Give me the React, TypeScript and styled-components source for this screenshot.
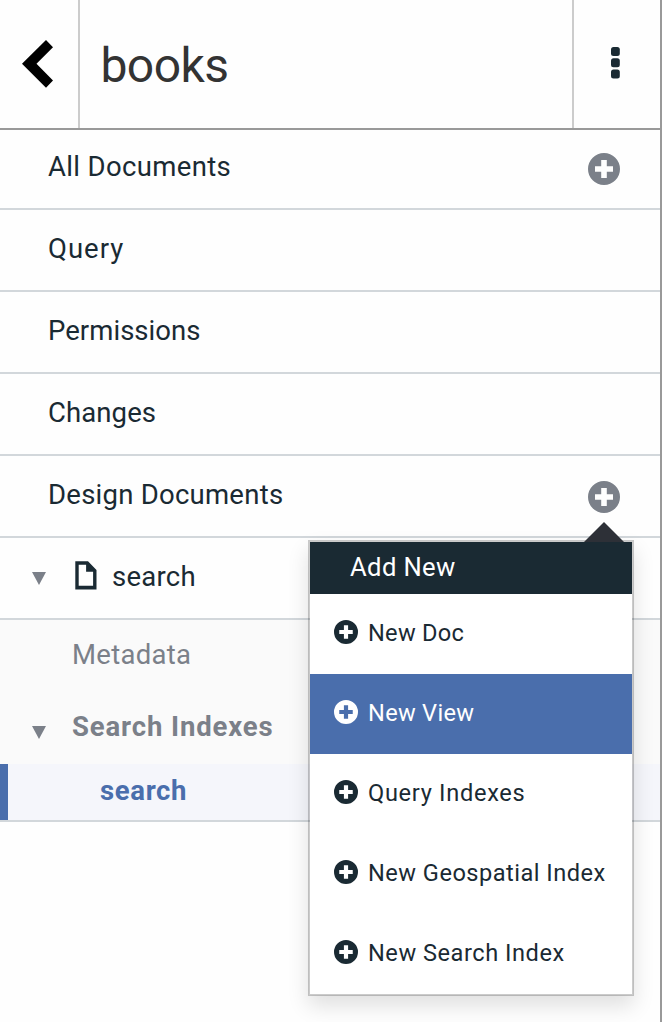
import React from "react";
import styled, { createGlobalStyle } from "styled-components";

const ink = "#1a2a33";
const blue = "#4a6eac";
const grey = "#7b8089";
const line = "#d2d7db";

const GlobalStyle = createGlobalStyle`
  *, *::before, *::after { box-sizing: border-box; }
  body {
    margin: 0;
    background: #fefefe;
    color: ${ink};
    font-family: Roboto, "Liberation Sans", sans-serif;
    overflow: hidden;
  }
  svg { display: block; flex: none; }
`;

const Sidebar = styled.div`
  width: 662px;
  height: 1022px;
  border-right: 2px solid #999;
`;

const Header = styled.header`
  display: flex;
  height: 130px;
  border-bottom: 2px solid #999;
`;

const HeaderButton = styled.button<{ $side: "left" | "right" }>`
  display: flex;
  align-items: center;
  flex: none;
  width: ${(p) => (p.$side === "left" ? 80 : 88)}px;
  padding: ${(p) => (p.$side === "left" ? "0 0 0 22px" : "0 0 2px 37px")};
  border: 0 solid #ccc;
  border-${(p) => (p.$side === "left" ? "right" : "left")}-width: 2px;
  background: none;
`;

const Title = styled.h1`
  flex: 1;
  margin: 0;
  padding: 3px 0 0 20.5px;
  font-size: 48px;
  font-weight: 400;
  line-height: 126px;
  color: #333;
`;

const Text = styled.span<{ $track?: number }>`
  letter-spacing: ${(p) => p.$track ?? 0}px;
  white-space: nowrap;
`;

const NavRow = styled.div<{ $first?: boolean }>`
  display: flex;
  align-items: center;
  justify-content: space-between;
  height: ${(p) => (p.$first ? 80 : 82)}px;
  padding: 0 40px ${(p) => (p.$first ? 5 : 3)}px 48px;
  border-bottom: 2px solid ${line};
  font-size: 27.5px;
  line-height: 34px;
`;

const AddButton = styled.button`
  display: flex;
  margin-top: 5px;
  padding: 0;
  border: 0;
  background: none;
  color: ${grey};
`;

const DesignDocRow = styled.div`
  display: flex;
  align-items: center;
  height: 82px;
  padding: 0 0 3px 32px;
  border-bottom: 2px solid ${line};
  font-size: 27.5px;
  line-height: 34px;

  svg:first-child { margin-top: 3px; }
  svg + svg { margin: 0 15px 2px 29px; }
`;

const IndexPanel = styled.div`
  border-bottom: 2px solid ${line};
  background: #fafafa;
  font-size: 27.5px;
  line-height: 34px;
`;

const SubRow = styled.div<{ $bold?: boolean }>`
  display: flex;
  align-items: center;
  height: 72px;
  padding: 0 0 3px ${(p) => (p.$bold ? 32 : 72)}px;
  color: ${grey};
  font-weight: ${(p) => (p.$bold ? 700 : 400)};

  svg { margin: 11px 26px 0 0; }
`;

const SelectedRow = styled.div`
  display: flex;
  align-items: center;
  height: 56px;
  padding: 0 0 3px 92px;
  border-left: 8px solid ${blue};
  background: #f5f6fb;
  color: ${blue};
  font-weight: 700;
`;

const Anchor = styled.div`
  position: relative;
`;

const Menu = styled.div`
  position: absolute;
  top: 64px;
  left: -280px;
  width: 326px;
  z-index: 2;
  border: 2px solid rgba(0, 0, 0, 0.2);
  background: #fff;
  background-clip: padding-box;
  box-shadow: 0 10px 20px rgba(0, 0, 0, 0.12);
  color: ${ink};

  &::before {
    content: "";
    position: absolute;
    top: -20px;
    right: 8px;
    border: solid transparent;
    border-width: 0 20px 20px;
    border-bottom-color: #2d3037;
  }
`;

const MenuHeading = styled.div`
  height: 52px;
  padding-left: 40px;
  background: ${ink};
  color: #fff;
  font-size: 25.6px;
  line-height: 50px;
`;

const MenuItem = styled.div<{ $active?: boolean }>`
  display: flex;
  align-items: center;
  gap: 10px;
  height: 80px;
  padding: 0 0 2px 24px;
  background: ${(p) => (p.$active ? blue : "#fff")};
  color: ${(p) => (p.$active ? "#fff" : ink)};
  font-size: 23.6px;
  line-height: 30px;

  svg { margin-bottom: 2px; }
`;

const PlusCircle = ({ size }: { size: number }) => (
  <svg width={size} height={size} viewBox="0 0 32 32">
    <path
      fill="currentColor"
      fillRule="evenodd"
      d="M16 0a16 16 0 1 1 0 32a16 16 0 1 1 0-32zM13.2 7v6.2H7v5.6h6.2V25h5.6v-6.2H25v-5.6h-6.2V7z"
    />
  </svg>
);

const Triangle = () => (
  <svg width="14" height="13" viewBox="0 0 14 13">
    <path fill={grey} d="M0 0h14L7 13z" />
  </svg>
);

const Chevron = () => (
  <svg width="32" height="48" viewBox="0 0 32 48">
    <path fill="#000" d="M24 0l7 7.2L14.5 23.8 31 40.5 24 47.8 0 23.8z" />
  </svg>
);

const Dots = () => (
  <svg width="10" height="32" viewBox="0 0 10 32">
    {[0, 11.3, 22.6].map((y) => (
      <rect key={y} x="0" y={y} width="8.8" height="9" rx="2.5" fill={ink} />
    ))}
  </svg>
);

const FileIcon = () => (
  <svg width="22" height="29" viewBox="0 0 22 29">
    <path
      fill={ink}
      fillRule="evenodd"
      d="M0.3 0.3h12.7l8.5 8.6V28.5H0.3zM3.7 3.8v21h14.4V10.7h-7V3.8z"
    />
  </svg>
);

const menuItems = [
  { label: "New Doc", track: 0.27 },
  { label: "New View", track: 0.3 },
  { label: "Query Indexes", track: 0.69 },
  { label: "New Geospatial Index", track: 0.48 },
  { label: "New Search Index", track: 0.53 },
];

const AddMenu = ({ active }: { active: string }) => (
  <Menu>
    <MenuHeading>
      <Text $track={0.38}>Add New</Text>
    </MenuHeading>
    {menuItems.map((item) => (
      <MenuItem key={item.label} $active={item.label === active}>
        <PlusCircle size={24} />
        <Text $track={item.track}>{item.label}</Text>
      </MenuItem>
    ))}
  </Menu>
);

export default function App() {
  return (
    <>
      <GlobalStyle />
      <Sidebar>
        <Header>
          <HeaderButton $side="left" aria-label="Back">
            <Chevron />
          </HeaderButton>
          <Title>
            <Text $track={-0.6}>books</Text>
          </Title>
          <HeaderButton $side="right" aria-label="More">
            <Dots />
          </HeaderButton>
        </Header>
        <nav>
          <NavRow $first>
            <Text $track={0.36}>All Documents</Text>
            <AddButton aria-label="Add document">
              <PlusCircle size={32} />
            </AddButton>
          </NavRow>
          <NavRow>
            <Text $track={1}>Query</Text>
          </NavRow>
          <NavRow>
            <Text $track={0.05}>Permissions</Text>
          </NavRow>
          <NavRow>
            <Text $track={0.1}>Changes</Text>
          </NavRow>
          <NavRow>
            <Text $track={0.25}>Design Documents</Text>
            <Anchor>
              <AddButton aria-label="Add design document">
                <PlusCircle size={32} />
              </AddButton>
              <AddMenu active="New View" />
            </Anchor>
          </NavRow>
          <DesignDocRow>
            <Triangle />
            <FileIcon />
            <Text $track={0.25}>search</Text>
          </DesignDocRow>
          <IndexPanel>
            <SubRow>
              <Text $track={0.28}>Metadata</Text>
            </SubRow>
            <SubRow $bold>
              <Triangle />
              <Text $track={0.87}>Search Indexes</Text>
            </SubRow>
            <SelectedRow>
              <Text $track={0.65}>search</Text>
            </SelectedRow>
          </IndexPanel>
        </nav>
      </Sidebar>
    </>
  );
}
